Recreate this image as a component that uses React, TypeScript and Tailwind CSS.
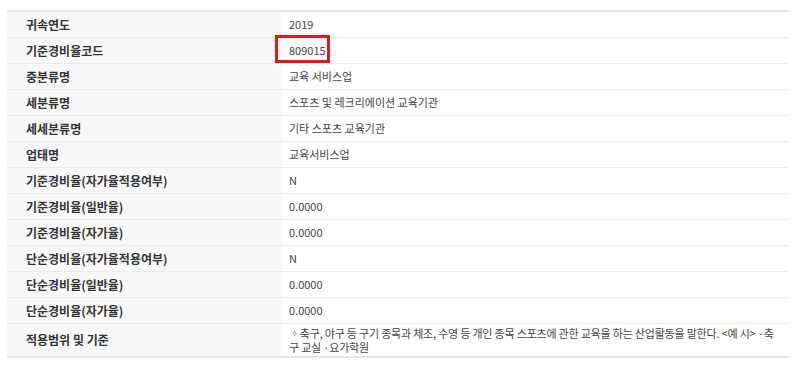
const ROWS: { label: string; value: string; mark?: boolean }[] = [
  { label: "귀속연도", value: "2019" },
  { label: "기준경비율코드", value: "809015", mark: true },
  { label: "중분류명", value: "교육 서비스업" },
  { label: "세분류명", value: "스포츠 및 레크리에이션 교육기관" },
  { label: "세세분류명", value: "기타 스포츠 교육기관" },
  { label: "업태명", value: "교육서비스업" },
  { label: "기준경비율(자가율적용여부)", value: "N" },
  { label: "기준경비율(일반율)", value: "0.0000" },
  { label: "기준경비율(자가율)", value: "0.0000" },
  { label: "단순경비율(자가율적용여부)", value: "N" },
  { label: "단순경비율(일반율)", value: "0.0000" },
  { label: "단순경비율(자가율)", value: "0.0000" },
];

export default function App() {
  return (
    <div
      className="w-[800px] h-[366px] bg-white pt-[10px] pl-[7px]"
      style={{ fontFamily: '"Noto Sans CJK KR", "Noto Sans", sans-serif' }}
    >
      <div className="w-[782px] border-t-2 border-b-2 border-[#e6e6e6]">
        {ROWS.map((row) => (
          <div key={row.label} className="flex h-[26px] border-b border-[#ececec]">
            <div className="w-[274px] shrink-0 bg-[#f8f8f8] pl-[19px] flex items-center text-[12px] font-bold text-[#333]">
              {row.label}
            </div>
            <div className="relative flex-1 pl-[8px] flex items-center text-[11px] text-[#444]">
              {row.value}
              {row.mark && (
                <div className="absolute left-[-6px] top-[-3px] w-[55px] h-[28px] border-[3px] border-[#e8151f]" />
              )}
            </div>
          </div>
        ))}
        <div className="flex h-[32px]">
          <div className="w-[274px] shrink-0 bg-[#f8f8f8] pl-[19px] flex items-center text-[12px] font-bold text-[#333]">
            적용범위 및 기준
          </div>
          <div className="flex-1 pl-[8px] pr-[6px] flex items-center text-[11px] leading-[14px] tracking-[-0.2px] text-[#444]">
            ◦축구, 야구 등 구기 종목과 체조, 수영 등 개인 종목 스포츠에 관한 교육을 하는 산업활동을 말한다. &lt;예 시&gt; ·축구 교실 ·요가학원
          </div>
        </div>
      </div>
    </div>
  );
}
